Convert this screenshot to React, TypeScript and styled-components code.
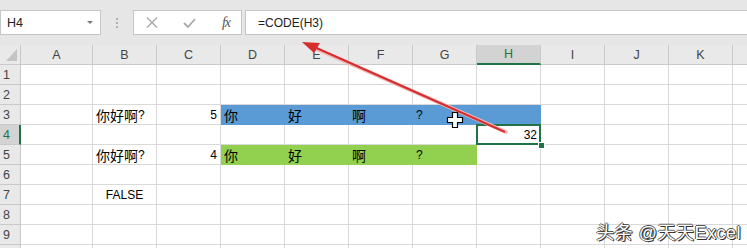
import React from "react";
import styled, { createGlobalStyle, css } from "styled-components";

const GlobalStyle = createGlobalStyle`
  body {
    margin: 0;
    background: #ffffff;
    font-family: "Liberation Sans", "Noto Sans CJK SC", sans-serif;
  }
`;

type Align = "left" | "center" | "right";

interface CellData {
  text?: React.ReactNode;
  align?: Align;
  fill?: string;
  selected?: boolean;
}

const BLUE = "#5b9bd5";
const GREEN = "#92d050";
const EXCEL_GREEN = "#217346";

// the last column (L) runs off the right edge, so its letter is not shown
const columns = ["A", "B", "C", "D", "E", "F", "G", "H", "I", "J", "K", "L"];
const widths = [72, 64, 64, 64, 64, 64, 64, 64, 64, 64, 64, 64];
const visibleLetter = (c: string) => (c === "L" ? "" : c);

const Han = styled.span`
  font-family: "Noto Sans CJK SC", sans-serif;
  font-size: 14px;
  line-height: 1;
`;

const rows: Record<number, Record<string, CellData>> = {
  3: {
    B: { text: <><Han>你好啊</Han>?</> },
    C: { text: "5", align: "right" },
    D: { text: <Han>你</Han>, fill: BLUE },
    E: { text: <Han>好</Han>, fill: BLUE },
    F: { text: <Han>啊</Han>, fill: BLUE },
    G: { text: "?", fill: BLUE },
    H: { fill: BLUE },
  },
  4: {
    H: { text: "32", align: "right", selected: true },
  },
  5: {
    B: { text: <><Han>你好啊</Han>?</> },
    C: { text: "4", align: "right" },
    D: { text: <Han>你</Han>, fill: GREEN },
    E: { text: <Han>好</Han>, fill: GREEN },
    F: { text: <Han>啊</Han>, fill: GREEN },
    G: { text: "?", fill: GREEN },
  },
  7: {
    B: { text: "FALSE", align: "center" },
  },
};

const Window = styled.div`
  position: relative;
  width: 747px;
  height: 248px;
  overflow: hidden;
  background: #ffffff;
`;

const FormulaBar = styled.div`
  display: flex;
  align-items: stretch;
  height: 45px;
  padding: 10px 0;
  box-sizing: border-box;
  background: #e6e6e6;
`;

const Box = styled.div`
  display: flex;
  align-items: center;
  box-sizing: border-box;
  background: #ffffff;
  border: 1px solid #c6c6c6;
`;

const NameBox = styled(Box)`
  width: 101px;
  justify-content: space-between;
  padding: 0 7px 0 6px;
  font-size: 12.5px;
  color: #222;
`;

const DropArrow = styled.span`
  width: 0;
  height: 0;
  border-left: 3px solid transparent;
  border-right: 3px solid transparent;
  border-top: 3px solid #7a7a7a;
`;

const Grip = styled.div`
  width: 32px;
  display: flex;
  flex-direction: column;
  align-items: center;
  justify-content: center;
  gap: 2px;

  span {
    width: 2px;
    height: 2px;
    background: #b0b0b0;
  }
`;

const ButtonGroup = styled(Box)`
  width: 109px;
  justify-content: space-between;
  padding: 0 11px 0 12px;
`;

const Fx = styled.span`
  font-family: "Liberation Serif", serif;
  font-style: italic;
  font-size: 14px;
  color: #555;
  letter-spacing: -1px;
`;

const FormulaInput = styled(Box)`
  flex: 1;
  margin-left: 3px;
  margin-right: -2px;
  padding-left: 12px;
  font-size: 12px;
  color: #222;
`;

const Sheet = styled.div`
  display: grid;
  grid-template-columns: 21px ${widths.map((w) => `${w}px`).join(" ")};
  grid-auto-rows: 20px;
  font-size: 12px;
  color: #000;
`;

const HeaderBase = css<{ $active?: boolean }>`
  display: flex;
  align-items: center;
  box-sizing: border-box;
  background: ${(p) => (p.$active ? "#d3d3d3" : "#e9e9e9")};
  color: ${(p) => (p.$active ? EXCEL_GREEN : "#444")};
  border-right: 1px solid #c9c9c9;
  border-bottom: 1px solid #c9c9c9;
  font-size: 12.5px;
`;

const Corner = styled.div`
  ${HeaderBase};
  justify-content: flex-end;
  align-items: flex-end;
  padding: 0 3px 3px 0;

  &::after {
    content: "";
    width: 0;
    height: 0;
    border-left: 11px solid transparent;
    border-bottom: 12px solid #c4c4c4;
  }
`;

const ColHeader = styled.div<{ $active?: boolean }>`
  ${HeaderBase};
  justify-content: center;
  ${(p) =>
    p.$active &&
    css`
      border-bottom: 2px solid ${EXCEL_GREEN};
    `}
`;

const RowHeader = styled.div<{ $active?: boolean }>`
  ${HeaderBase};
  padding-left: 3px;
  border-right-color: ${(p) => (p.$active ? EXCEL_GREEN : "#c9c9c9")};
  border-right-width: ${(p) => (p.$active ? "2px" : "1px")};
`;

const Cell = styled.div<{ $align?: Align; $fill?: string; $selected?: boolean }>`
  position: relative;
  display: flex;
  align-items: center;
  justify-content: ${(p) =>
    p.$align === "right" ? "flex-end" : p.$align === "center" ? "center" : "flex-start"};
  box-sizing: border-box;
  padding: 0 3px;
  white-space: nowrap;
  background: ${(p) => p.$fill ?? "#ffffff"};
  border-right: 1px solid ${(p) => p.$fill ?? "#d9d9d9"};
  border-bottom: 1px solid ${(p) => p.$fill ?? "#d9d9d9"};

  ${(p) =>
    p.$selected &&
    css`
      &::before {
        content: "";
        position: absolute;
        inset: -1px;
        border: 2px solid ${EXCEL_GREEN};
        z-index: 2;
      }
      &::after {
        content: "";
        position: absolute;
        right: -4px;
        bottom: -4px;
        width: 5px;
        height: 5px;
        background: ${EXCEL_GREEN};
        outline: 1px solid #ffffff;
        z-index: 3;
      }
    `}
`;

const Overlay = styled.svg`
  position: absolute;
  inset: 0;
  pointer-events: none;
  z-index: 5;
`;

const Watermark = styled.div`
  position: absolute;
  right: 6px;
  bottom: 4px;
  z-index: 6;
  font-family: "Liberation Sans", "Noto Sans CJK SC", sans-serif;
  font-size: 18px;
  letter-spacing: 0.5px;
  color: #ffffff;
  text-shadow: 1px 1px 0 #333, -1px 0 0 #555, 0 -1px 0 #555, 1px 0 0 #444;
`;

const XIcon = () => (
  <svg width="12" height="11" viewBox="0 0 12 11">
    <path d="M1 0.5 L11 10.5 M11 0.5 L1 10.5" stroke="#a9a9a9" strokeWidth="1.3" fill="none" />
  </svg>
);

const CheckIcon = () => (
  <svg width="13" height="10" viewBox="0 0 13 10">
    <path d="M1 5 L5 9 L12 1" stroke="#a9a9a9" strokeWidth="1.8" fill="none" />
  </svg>
);

const App = () => {
  // row 10 only peeks in at the bottom edge, its number is not visible
  const rowNumbers = [1, 2, 3, 4, 5, 6, 7, 8, 9, 10];
  return (
    <Window>
      <GlobalStyle />
      <FormulaBar>
        <NameBox>
          H4
          <DropArrow />
        </NameBox>
        <Grip>
          <span />
          <span />
          <span />
        </Grip>
        <ButtonGroup>
          <XIcon />
          <CheckIcon />
          <Fx>fx</Fx>
        </ButtonGroup>
        <FormulaInput>=CODE(H3)</FormulaInput>
      </FormulaBar>

      <Sheet>
        <Corner />
        {columns.map((c) => (
          <ColHeader key={c} $active={c === "H"}>
            {visibleLetter(c)}
          </ColHeader>
        ))}
        {rowNumbers.map((r) => (
          <React.Fragment key={r}>
            <RowHeader $active={r === 4}>{r < 10 ? r : ""}</RowHeader>
            {columns.map((c) => {
              const d = rows[r]?.[c];
              return (
                <Cell key={c} $align={d?.align} $fill={d?.fill} $selected={d?.selected}>
                  {d?.text}
                </Cell>
              );
            })}
          </React.Fragment>
        ))}
      </Sheet>

      <Overlay width="747" height="248" viewBox="0 0 747 248">
        {/* red arrow pointing at the formula */}
        <line x1="506" y1="132" x2="310" y2="46" stroke="#f2b8b8" strokeWidth="4" strokeLinecap="round" />
        <line x1="505" y1="132" x2="312" y2="46" stroke="#d62d2d" strokeWidth="2" />
        <polygon points="302,42 320,43 314,53" fill="#d62d2d" />
        {/* cell cursor */}
        <path
          d="M452.5 112.5 h5 v5 h5 v5 h-5 v5 h-5 v-5 h-5 v-5 h5 z"
          fill="#ffffff"
          stroke="#000000"
          strokeWidth="1.2"
        />
      </Overlay>

      <Watermark>头条 @天天Excel</Watermark>
    </Window>
  );
};

export default App;
